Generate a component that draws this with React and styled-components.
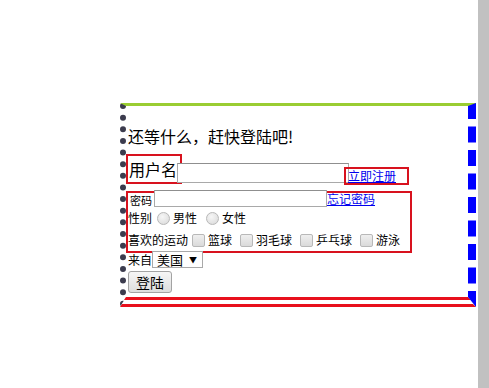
import styled, { createGlobalStyle } from 'styled-components'

const GlobalStyle = createGlobalStyle`
  html, body {
    margin: 0;
    padding: 0;
    background: #ffffff;
  }
  body {
    font-family: 'Noto Sans CJK SC', 'Noto Sans', sans-serif;
    color: #000;
  }
`

function App() {
  return (
    <>
      <GlobalStyle />
      <Page>
        <Main>
          <LoginForm>
            <Title>还等什么，赶快登陆吧!</Title>
            <UserRow>
              <UserLabel>用户名</UserLabel>
              <TextInput $width={172} $height={20} $top={9} />
              <BoxedLink href="#">立即注册</BoxedLink>
            </UserRow>
            <Group>
              <Row $height={17} $top={-3}>
                <SmallLabel>密码</SmallLabel>
                <TextInput type="password" $width={173} $height={17} $top={0} />
                <PlainLink href="#">忘记密码</PlainLink>
              </Row>
              <Row $height={22}>
                <Label>性别</Label>
                <Option>
                  <Radio type="radio" name="sex" />
                  男性
                </Option>
                <Option>
                  <Radio type="radio" name="sex" />
                  女性
                </Option>
              </Row>
              <Row $height={22}>
                <Label>喜欢的运动</Label>
                {['篮球', '羽毛球', '乒乓球', '游泳'].map((s) => (
                  <Option key={s}>
                    <Check type="checkbox" />
                    {s}
                  </Option>
                ))}
              </Row>
            </Group>
            <Row $height={17} $top={-2}>
              <Label>来自</Label>
              <SelectBox>
                <select defaultValue="us">
                  <option value="us">美国</option>
                </select>
                <Arrow>▼</Arrow>
              </SelectBox>
            </Row>
            <Submit type="button">登陆</Submit>
          </LoginForm>
        </Main>
        <Scrollbar />
      </Page>
    </>
  )
}

export default App

const Page = styled.div`
  display: flex;
  width: 489px;
  height: 388px;
  overflow: hidden;
`

const Main = styled.div`
  width: 478px;
  padding: 103px 0 0 120px;
  box-sizing: border-box;
`

const Scrollbar = styled.div`
  width: 11px;
  height: 100%;
  background: #c1c1c1;
`

const LoginForm = styled.form`
  width: 356px;
  box-sizing: border-box;
  border-top: 3px solid yellowgreen;
  border-right: 8px dashed #0000ff;
  border-bottom: 10px double #e8101c;
  border-left: 6px dotted #3c3c4e;
  padding-bottom: 4px;
  margin: 0;
`

const Title = styled.div`
  margin: 19px 0 0 2px;
  font-size: 16px;
  line-height: 22px;
  height: 22px;
`

const UserRow = styled.div`
  display: flex;
  align-items: flex-start;
  margin-top: 7px;
`

const UserLabel = styled.span`
  display: block;
  box-sizing: border-box;
  width: 56px;
  height: 30px;
  border: 2px solid #d8121e;
  padding-left: 1px;
  font-size: 16px;
  line-height: 26px;
`

const TextInput = styled.input`
  display: block;
  box-sizing: border-box;
  width: ${(p) => p.$width}px;
  height: ${(p) => p.$height}px;
  margin: ${(p) => p.$top}px 0 0 0;
  border: 1px solid #a9a9a9;
  border-top-color: #8f8f8f;
  background: #fff;
  padding: 0 2px;
  outline: none;
  ${UserRow} & {
    margin-left: -5px;
  }
`

const BoxedLink = styled.a`
  display: block;
  box-sizing: border-box;
  width: 65px;
  height: 18px;
  margin: 13px 0 0 -5px;
  border: 2px solid #d8121e;
  padding-left: 2px;
  font-size: 12px;
  line-height: 14px;
  color: #0000ee;
`

const Group = styled.div`
  width: 286px;
  box-sizing: border-box;
  margin-top: 6px;
  border: 2px solid #d8121e;
`

const Row = styled.div`
  display: flex;
  align-items: center;
  height: ${(p) => p.$height}px;
  margin-top: ${(p) => p.$top || 0}px;
  margin-left: 2px;
  font-size: 12px;
  white-space: nowrap;
  ${Group} & {
    margin-left: 0;
  }
`

const Label = styled.span`
  font-size: 12px;
  line-height: 16px;
`

const SmallLabel = styled.span`
  font-size: 11px;
  line-height: 14px;
  margin: 2px 2px 0 2px;
`

const PlainLink = styled.a`
  font-size: 12px;
  line-height: 14px;
  color: #0000ee;
`

const Option = styled.label`
  display: flex;
  align-items: center;
  font-size: 12px;
  line-height: 16px;
  & + & {
    margin-left: 4px;
  }
`

const Radio = styled.input`
  appearance: none;
  width: 13px;
  height: 13px;
  margin: 0 3px 0 5px;
  border: 1px solid #b8b8b8;
  border-radius: 50%;
  background: radial-gradient(circle at 40% 35%, #f6f6f6, #d8d8d8);
  box-sizing: border-box;
`

const Check = styled.input`
  appearance: none;
  width: 13px;
  height: 13px;
  margin: 0 3px 0 4px;
  border: 1px solid #b8b8b8;
  border-radius: 2px;
  background: linear-gradient(#efefef, #dadada);
  box-sizing: border-box;
`

const SelectBox = styled.span`
  display: flex;
  align-items: center;
  box-sizing: border-box;
  width: 51px;
  height: 17px;
  border: 1px solid #a9a9a9;
  background: #fff;

  select {
    appearance: none;
    border: none;
    background: transparent;
    font-family: inherit;
    font-size: 13px;
    line-height: 15px;
    padding: 0 0 0 4px;
    width: 34px;
    outline: none;
    color: #000;
  }
`

const Arrow = styled.span`
  font-size: 8px;
  line-height: 10px;
  margin-left: 2px;
`

const Submit = styled.button`
  display: block;
  box-sizing: border-box;
  width: 44px;
  height: 22px;
  margin: 3px 0 0 2px;
  padding: 0;
  border: 1px solid #a3a3a3;
  border-radius: 3px;
  background: linear-gradient(#f6f6f6, #dddddd);
  font-family: inherit;
  font-size: 14px;
  line-height: 18px;
  color: #000;
`
